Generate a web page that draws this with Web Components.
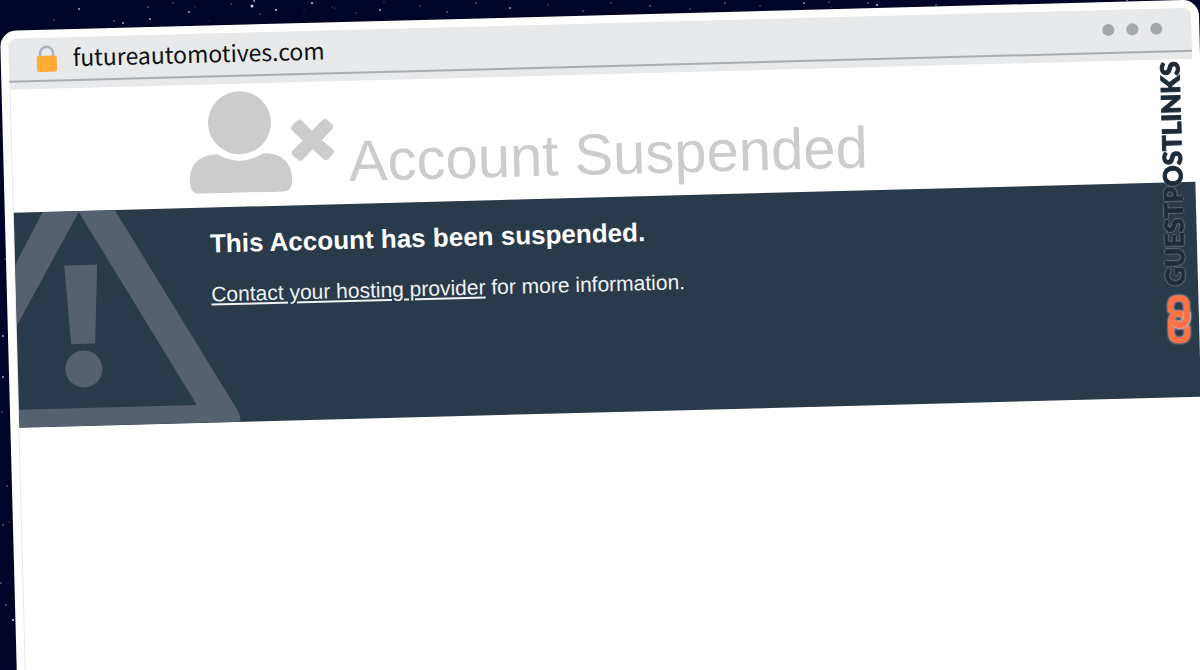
<!DOCTYPE html>
<html lang="en">
<head>
<meta charset="utf-8">
<title>Account Suspended</title>
<style>
  body { margin: 0; font-family: "Liberation Sans", Arial, sans-serif; }
</style>
</head>
<body>
<night-stage>
  <browser-window>
    <address-bar slot="bar">futureautomotives.com</address-bar>
    <suspended-page></suspended-page>
    <side-brand slot="brand">GUESTPOSTLINKS</side-brand>
  </browser-window>
</night-stage>

<script>
const define = (name, html, setup) => {
  const template = document.createElement('template');
  template.innerHTML = html;
  customElements.define(name, class extends HTMLElement {
    constructor() {
      super();
      this.attachShadow({ mode: 'open' }).append(template.content.cloneNode(true));
      if (setup) setup(this.shadowRoot);
    }
  });
};

/* Starry backdrop: [x, y, radius, opacity] */
const STARS = [
  [79,9,.9,.8],[54,20,.8,.5],[114,21,.7,.6],[123,23,.9,.8],[150,19,.9,.8],[148,7,.8,.6],[173,3,.7,.5],[189,12,.9,.8],
  [195,7,.6,.4],[209,21,.6,.3],[231,4,.7,.5],[252,6,1.5,.9],[254,1,.9,.7],[260,14,.7,.6],[276,10,1.1,.9],[304,10,.6,.4],
  [312,3,1.1,.8],[332,7,.6,.4],[335,8,.6,.4],[356,13,.7,.4],[380,10,.9,.8],[384,2,.6,.5],[420,6,.7,.5],[447,12,.8,.6],
  [476,3,.8,.5],[510,8,.9,.7],[548,5,.7,.5],[583,11,.8,.6],[611,3,.7,.5],[650,6,.8,.6],[690,9,.7,.5],[725,3,.8,.6],
  [760,6,.7,.5],[804,3,.9,.7],[829,2,.7,.5],[831,7,.6,.4],[868,3,.8,.6],[877,5,1.1,.8],[936,5,.8,.6],[1127,0,1,.7],
  [5,259,.8,.6],[3,336,.9,.7],[3,377,.9,.8],[2,412,.7,.6],[7,486,.8,.5],[9,522,.6,.4],[3,525,.8,.6],[1,583,.8,.6],
  [6,605,.8,.6],[13,620,1,.9]
];

define('night-stage', `
  <style>
    :host { display: block; position: relative; min-height: 100vh; overflow: hidden; background: #02052a; }
    svg { position: absolute; inset: 0; width: 100%; height: 100%; fill: #e4e8ff; }
    main { position: relative; padding: 31px 1px 0 0; height: 100vh; box-sizing: border-box; }
  </style>
  <svg aria-hidden="true"></svg>
  <main><slot></slot></main>`, root => {
  root.querySelector('svg').innerHTML = STARS
    .map(([x, y, r, o]) => `<circle cx="${x}" cy="${y}" r="${r}" opacity="${o}"/>`).join('');
});

define('browser-window', `
  <style>
    :host {
      display: flex; flex-direction: column; position: relative; box-sizing: border-box;
      min-height: 110vh; padding: 8px; border-radius: 16px 16px 0 0; background: #fff;
      box-shadow: 0 0 3px #0008;
      transform: rotate(-1.5deg); transform-origin: 0 0;
    }
    .view { flex: 1; border-left: 1px solid #e7e9eb; }
  </style>
  <slot name="bar"></slot>
  <div class="view"><slot></slot></div>
  <slot name="brand"></slot>`);

define('address-bar', `
  <style>
    :host { display: block; border-radius: 8px 8px 0 0; background: #e7e9eb; padding-bottom: 7px; }
    .bar { display: flex; align-items: center; height: 42px; padding: 0 29px 0 27px; border-bottom: 2px solid #a9acb3; }
    .lock { width: 22px; height: 28px; margin-right: 15px; }
    .url { flex: 1; padding-bottom: 4px; font: 23px/36px "Noto Sans CJK SC", "Noto Sans", sans-serif; color: #111; }
    .dots { display: flex; gap: 12px; padding-bottom: 2px; }
    i { width: 12px; height: 12px; border-radius: 50%; background: #a6a7ab; }
  </style>
  <div class="bar">
    <svg class="lock" viewBox="0 0 22 28" aria-hidden="true">
      <path d="M4.500 13V8.500a6.500 6.500 0 0 1 13 0V13" fill="none" stroke="#aab4c4" stroke-width="2.600"/>
      <rect x="1" y="11" width="20" height="16" rx="2" fill="#ffac33"/>
    </svg>
    <span class="url"><slot></slot></span>
    <span class="dots"><i></i><i></i><i></i></span>
  </div>`);

define('suspended-page', `
  <style>
    :host { display: block; }
    header { display: flex; align-items: flex-end; gap: 13px; padding: 7px 0 14px 15%; color: #ccc; }
    header svg { flex: none; width: 146px; height: 102px; fill: currentColor; }
    h1 { margin: 0; font-size: 58px; line-height: 58px; font-weight: 400; white-space: nowrap; }
    section { position: relative; min-height: 194px; padding: 21px 0 0 15%; overflow: hidden; background: #293a4a; color: #fff; }
    .warning { position: absolute; left: 0; top: 0; width: 222px; height: 215px; fill: #55616e; }
    .message { position: relative; padding-left: 18px; }
    h2 { margin: 0 0 24px; font-size: 26px; line-height: 30px; }
    p { margin: 0; font-size: 21px; line-height: 24px; color: #f0f2f4; }
    a { color: inherit; }
  </style>
  <header>
    <svg viewBox="0 0 146 102" aria-hidden="true">
      <circle cx="51" cy="32" r="31.500"/>
      <path d="M28 63Q51 77 74 63C92 63 102 73 102 88V92Q102 102 92 102H10Q0 102 0 92V88C0 73 10 63 28 63Z"/>
      <path d="M123 42 L134 31.500Q136.500 29 139 31.500L143.500 36Q146 38.500 143.500 41L133 51.500L143.500 61Q146 63.500 143.500 66L139 70.500Q136.500 73 134 70.500L123.500 60.500L113.500 70.500Q111 73 108.500 70.500L103.500 66Q101 63.500 103.500 61L113.500 51.500L103.500 41Q101 38.500 103.500 36L108.500 31.500Q111 29 113.500 31.500Z"/>
    </svg>
    <h1>Account Suspended</h1>
  </header>
  <section>
    <svg class="warning" viewBox="0 0 222 215" aria-hidden="true">
      <path d="M29 0H101L219 204Q222 209 221 215H0V197H178L65 1L0 113V52Z"/>
      <path d="M49 54H82L78 133H54Z"/>
      <circle cx="66" cy="158" r="18.500"/>
    </svg>
    <div class="message">
      <h2>This Account has been suspended.</h2>
      <p><a href="#contact">Contact your hosting provider</a> for more information.</p>
    </div>
  </section>`);

define('side-brand', `
  <style>
    :host { position: absolute; right: 16px; top: 61px; display: flex; flex-direction: column; align-items: flex-start; gap: 8px; width: 28px; }
    span {
      writing-mode: vertical-rl; transform: rotate(180deg);
      font: 900 26px/26px Lato, sans-serif; color: #1d2b39;
      -webkit-text-stroke: 1px #1d2b39;
      text-shadow: 0 0 1px #fff, 0 0 1px #dde, 0 0 2px #ccd;
    }
    svg { align-self: flex-end; width: 24px; height: 50px; filter: drop-shadow(0 0 1px #dde); }
    .gap { stroke: #c4b0ac; stroke-width: 8; }
  </style>
  <span><slot></slot></span>
  <svg viewBox="0 0 24 50" fill="none" stroke="#ff7043" stroke-width="6" aria-hidden="true">
    <path d="M20 32V38Q20 46 13 46H11Q4 46 4 38V29Q4 20 11 19Q15 19 17 23"/>
    <path class="gap" d="M20 18V21Q20 30 13 31Q10 31 8 28"/>
    <path d="M4 18V12Q4 4 11 4H13Q20 4 20 12V21Q20 30 13 31Q9 31 7 27"/>
  </svg>`);
</script>
</body>
</html>
